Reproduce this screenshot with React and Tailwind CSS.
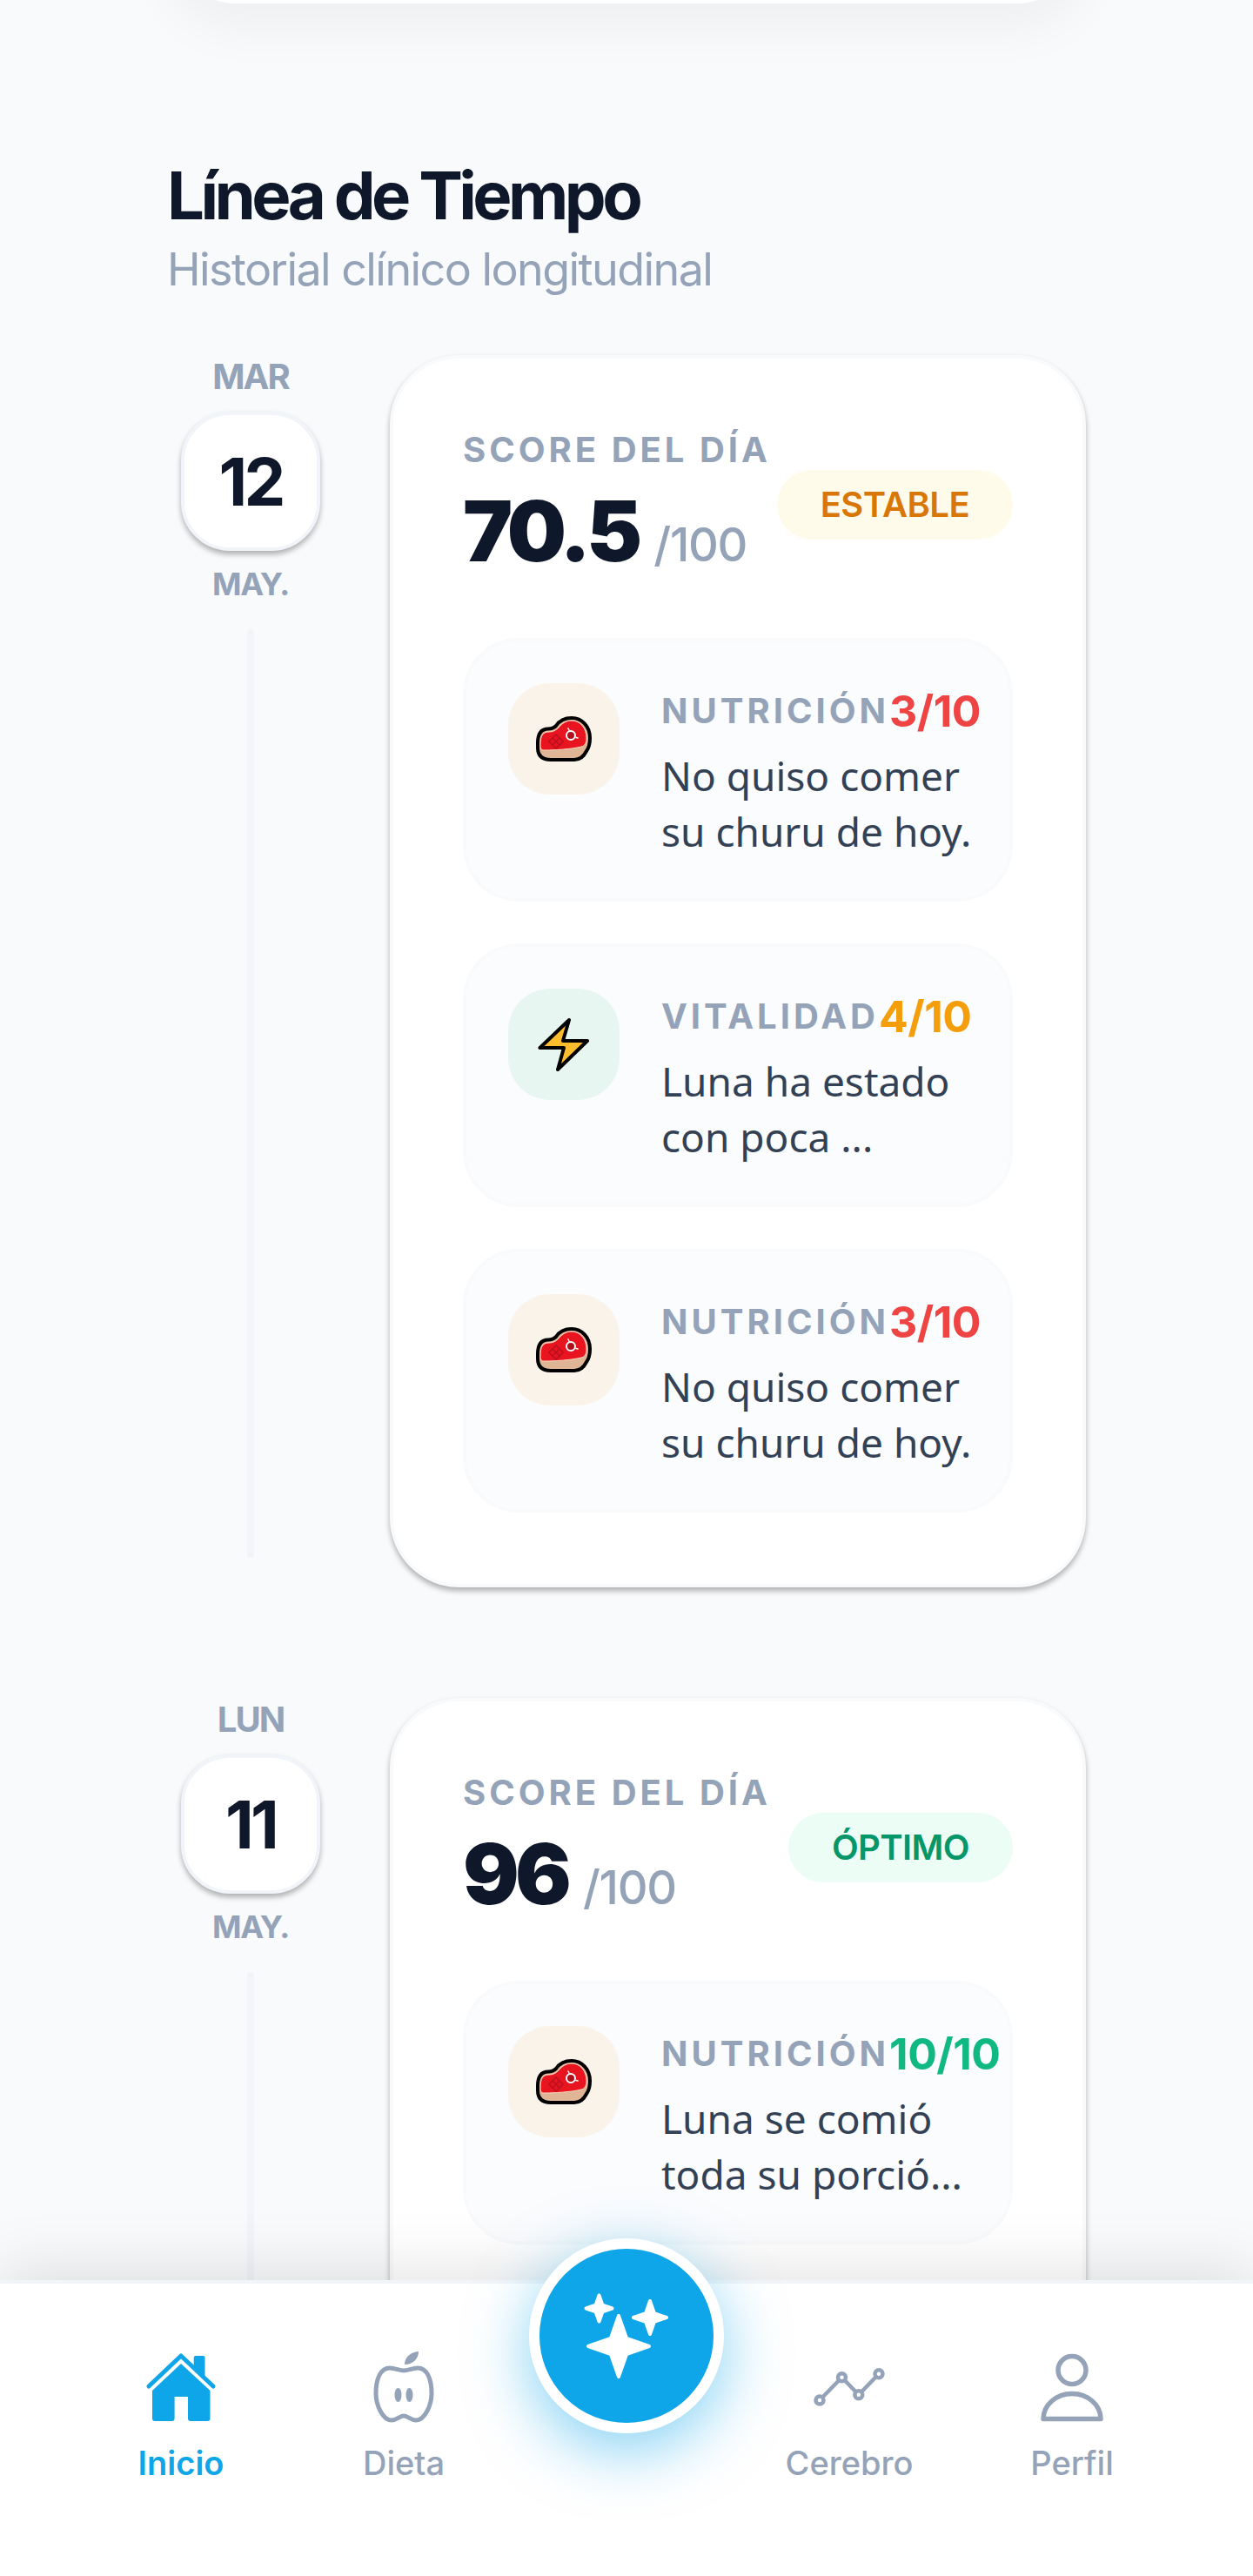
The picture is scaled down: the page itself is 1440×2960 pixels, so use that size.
const TIMELINE = [
  {
    weekday: "MAR",
    day: "12",
    month: "MAY.",
    score: "70.5",
    status: "ESTABLE",
    statusClass: "bg-[#fffbeb] text-[#d97706]",
    items: [
      { type: "meat", label: "NUTRICIÓN", value: "3/10", valueClass: "text-[#ef4444]", text: "No quiso comer su churu de hoy." },
      { type: "bolt", label: "VITALIDAD", value: "4/10", valueClass: "text-[#f59e0b]", text: "Luna ha estado con poca ..." },
      { type: "meat", label: "NUTRICIÓN", value: "3/10", valueClass: "text-[#ef4444]", text: "No quiso comer su churu de hoy." },
    ],
  },
  {
    weekday: "LUN",
    day: "11",
    month: "MAY.",
    score: "96",
    status: "ÓPTIMO",
    statusClass: "bg-[#ecfdf5] text-[#059669]",
    items: [
      { type: "meat", label: "NUTRICIÓN", value: "10/10", valueClass: "text-[#10b981]", text: "Luna se comió toda su porció..." },
    ],
  },
];

function MeatIcon() {
  return (
    <svg width="64" height="52" viewBox="0 0 64 52">
      <path
        d="M2 31C2 20 6 14.5 14 14.5C18 14.5 20 14 23 11C27 5 33 2 41 2C53 2 62 12 62 25C62 30 61 36 58 40C55 46 50 50 44 50L17 50C8 50 2 46 2 36Z"
        fill="#dfb595"
        stroke="#000"
        strokeWidth="4"
      />
      <path
        d="M5 33C5 22 8 18 15 18C20 18 23 16 26 13C30 8 35 5 41 5C51 5 58 14 58 25C58 31 56 34 52 35C40 38 20 39 10 39C6 39 5 37 5 33Z"
        fill="#e8141f"
        stroke="#f8d9c2"
        strokeWidth="1"
      />
      <path d="M15 29L23 21L31 29L23 37ZM19 25L27 33M27 25L19 33" fill="none" stroke="#bb1020" strokeWidth="1.6" />
      <circle cx="40" cy="22" r="5" fill="#b0101c" stroke="#fff" strokeWidth="2" />
      <path d="M37 14L38.5 17M46 24.5L48 25" stroke="#fff" strokeWidth="1.6" strokeLinecap="round" />
    </svg>
  );
}

function BoltIcon() {
  return (
    <svg width="60" height="63" viewBox="0 0 60 63">
      <path
        d="M36 3L2.5 35H30L23 60L57 27H29Z"
        fill="#fdbd2c"
        stroke="#000"
        strokeWidth="4"
        strokeLinejoin="round"
      />
    </svg>
  );
}

function HomeIcon() {
  return (
    <svg width="96" height="96" viewBox="0 0 96 96" fill="#0ea5e9">
      <path d="M11 46L48 11L85 46" fill="none" stroke="#0ea5e9" strokeWidth="5" strokeLinecap="round" strokeLinejoin="round" />
      <path d="M62.7 23V13a2 2 0 012-2h8.8a2 2 0 012 2V36Z" />
      <path d="M48 20L15 51V83a3 3 0 003 3H37.6a3 3 0 003-3V58H56V83a3 3 0 003 3H78.5a3 3 0 003-3V51Z" />
    </svg>
  );
}

function AppleIcon() {
  return (
    <svg width="96" height="96" viewBox="0 0 96 96" fill="#94a3b8">
      <path
        d="M48 28C43 28 38 25 32 25C21 25 16 38 16 54C16 68 24 85 34 85C40 85 43 80 48 80C53 80 56 85 62 85C72 85 80 68 80 54C80 38 75 25 64 25C58 25 53 28 48 28Z"
        fill="none"
        stroke="#94a3b8"
        strokeWidth="5"
      />
      <path d="M49 21C49 13 55 7 65 6C65 14 59 21 49 21Z" />
      <ellipse cx="41.5" cy="56" rx="4" ry="8" />
      <ellipse cx="54.5" cy="56" rx="4" ry="8" />
    </svg>
  );
}

function ChartIcon() {
  return (
    <svg width="96" height="96" viewBox="0 0 96 96" fill="none" stroke="#94a3b8" strokeWidth="4.5">
      <path d="M14 62L39.5 35.7L58.8 55.7L82 31.7" />
      <circle cx="14" cy="62" r="4.5" fill="#fff" />
      <circle cx="39.5" cy="35.7" r="4.5" fill="#fff" />
      <circle cx="58.8" cy="55.7" r="4.5" fill="#fff" />
      <circle cx="82" cy="31.7" r="4.5" fill="#fff" />
    </svg>
  );
}

function PersonIcon() {
  return (
    <svg width="96" height="96" viewBox="0 0 96 96" fill="none" stroke="#94a3b8" strokeWidth="5.5" strokeLinejoin="round">
      <circle cx="48" cy="27.5" r="16" />
      <path d="M15 83.5A33 29 0 0181 83.5Z" />
    </svg>
  );
}

// four point star, a little stroke rounds the tips
function Star({ x, y, r }) {
  const w = r * 0.26;
  const d = `M${x} ${y - r}L${x + w} ${y - w}L${x + r} ${y}L${x + w} ${y + w}L${x} ${y + r}L${x - w} ${y + w}L${x - r} ${y}L${x - w} ${y - w}Z`;
  return <path d={d} fill="#fff" stroke="#fff" strokeWidth="4" strokeLinejoin="round" />;
}

function ScoreItem({ item }) {
  return (
    <div className="flex h-[303px] gap-[48px] rounded-[64px] border-4 border-[#f8fafc] bg-[#fbfcfe] p-[48px]">
      <div
        className={`flex h-[128px] w-[128px] shrink-0 items-center justify-center rounded-[48px] ${
          item.type === "meat" ? "bg-[#faf3ea]" : "bg-[#e8f6f2]"
        }`}
      >
        {item.type === "meat" ? <MeatIcon /> : <BoltIcon />}
      </div>
      <div className="min-w-0 flex-1">
        <div className="flex h-[60px] items-center pt-[4px] whitespace-nowrap">
          <span className="text-[40px] font-bold tracking-[0.1em] text-[#94a3b8]">{item.label}</span>
          <span className={`text-[50px] font-bold tracking-[-0.01em] ${item.valueClass}`}>{item.value}</span>
        </div>
        <p className="mt-[14px] -mr-[8px] font-['Noto_Sans',sans-serif] text-[46px] leading-[64px] text-[#334155]">{item.text}</p>
      </div>
    </div>
  );
}

function TimelineRow({ entry }) {
  return (
    <div className="flex gap-[64px]">
      <div className="flex w-[192px] shrink-0 flex-col items-center pt-[3px] pb-[34px]">
        <span className="mt-[2px] text-[40px] leading-[40px] font-bold tracking-[-0.05em] text-[#94a3b8]">{entry.weekday}</span>
        <div className="mt-[20px] flex h-[160px] w-[160px] items-center justify-center rounded-[56px] border-4 border-[#f1f5f9] bg-white shadow-[0_4px_6px_rgba(0,0,0,0.3)]">
          <span className="text-[76px] font-bold tracking-[-0.05em] text-[#0f172a]">{entry.day}</span>
        </div>
        <span className="mt-[18px] text-[36px] leading-[40px] font-bold tracking-[-0.04em] text-[#94a3b8]">{entry.month}</span>
        <div className="mt-[32px] w-[8px] flex-1 rounded-full bg-[#f1f5f9]" />
      </div>
      <div className="min-h-[800px] w-[800px] min-w-0 shrink-0 rounded-[80px] border-4 border-[#f8fafc] bg-white px-[80px] pt-[83px] pb-[82px] shadow-[0_4px_6px_rgba(0,0,0,0.3)]">
        <div className="flex h-[170px] items-center justify-between">
          <div>
            <p className="pt-[10px] text-[40px] leading-[46px] font-bold tracking-[0.1em] text-[#94a3b8]">SCORE DEL DÍA</p>
            <p className="mt-[20px] flex items-baseline gap-[18px] leading-[100px]">
              <span className="text-[96px] font-black tracking-[-0.05em] text-[#0f172a]">{entry.score}</span>
              <span className="text-[54px] font-medium tracking-tight text-[#94a3b8]">/100</span>
            </p>
          </div>
          <span className={`flex h-[80px] items-center rounded-full px-[50px] text-[40px] font-semibold tracking-[-0.015em] ${entry.statusClass}`}>
            {entry.status}
          </span>
        </div>
        <div className="mt-[68px] flex flex-col gap-[48px]">
          {entry.items.map((item, i) => (
            <ScoreItem key={i} item={item} />
          ))}
        </div>
      </div>
    </div>
  );
}

function NavItem({ icon, label, active }) {
  return (
    <div className="flex flex-col items-center">
      {icon}
      <span className={`mt-[8px] text-[38px] leading-[60px] ${active ? "font-semibold text-[#0ea5e9]" : "font-medium text-[#94a3b8]"}`}>
        {label}
      </span>
    </div>
  );
}

export default function App() {
  return (
    <div className="flex h-[2960px] w-[1440px] flex-col overflow-hidden bg-[#f8fafc] font-['Inter',sans-serif]">
      <main className="min-h-0 flex-1 overflow-hidden px-[192px]">
        <div className="-mt-[400px] h-[404px] rounded-[80px] bg-white shadow-[0_24px_64px_rgba(0,0,0,0.05)]" />
        <h1 className="mt-[172px] text-[76px] leading-[96px] font-bold tracking-[-0.06em] text-[#0f172a]">Línea de Tiempo</h1>
        <p className="mt-[2px] text-[52px] leading-[72px] font-normal tracking-[-0.03em] text-[#94a3b8]">Historial clínico longitudinal</p>
        <div className="mt-[62px] flex flex-col gap-[127px]">
          {TIMELINE.map((entry) => (
            <TimelineRow key={entry.day} entry={entry} />
          ))}
        </div>
      </main>
      <nav className="relative z-10 h-[340px] shrink-0 border-t-4 border-[#f1f5f9] bg-white shadow-[0_-16px_64px_rgba(0,0,0,0.1)]">
        <div className="grid grid-cols-5 px-[80px] pt-[72px]">
          <NavItem icon={<HomeIcon />} label="Inicio" active />
          <NavItem icon={<AppleIcon />} label="Dieta" />
          <div />
          <NavItem icon={<ChartIcon />} label="Cerebro" />
          <NavItem icon={<PersonIcon />} label="Perfil" />
        </div>
        <div className="absolute -top-[52px] left-1/2 h-[224px] w-[224px] -translate-x-1/2 rounded-full border-[12px] border-white bg-[#0ea5e9] shadow-[0_20px_70px_rgba(14,165,233,0.5)]">
          <svg width="200" height="200" viewBox="0 0 200 200">
            <Star x={68.5} y={68.5} r={15} />
            <Star x={91} y={112} r={35} />
            <Star x={127} y={79} r={19} />
          </svg>
        </div>
      </nav>
    </div>
  );
}
